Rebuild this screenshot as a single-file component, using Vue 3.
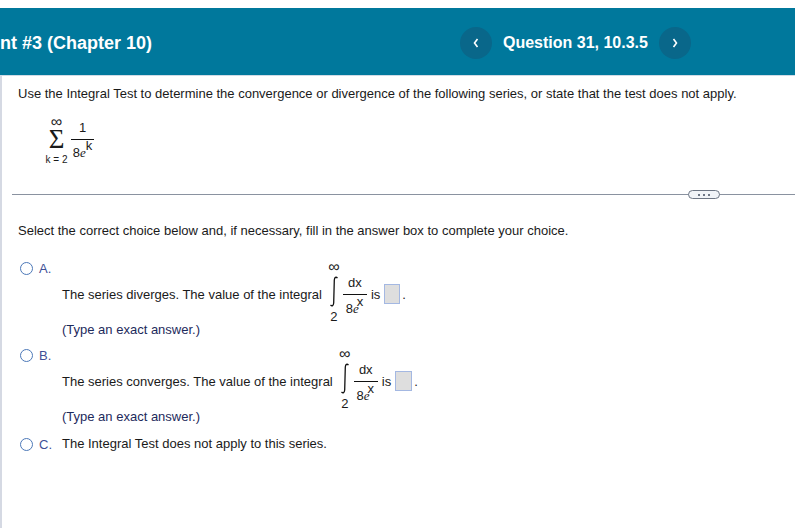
<script setup>
const choices = [
  { key: 'A', verb: 'diverges', variable: 'x' },
  { key: 'B', verb: 'converges', variable: 'x' }
]
</script>

<template>
  <div class="page">
    <header class="top-bar">
      <div class="title"><span>Assignment #3 (Chapter 10)</span></div>
      <nav class="question-nav">
        <button class="nav-btn">
          <svg width="8" height="10" viewBox="0 0 8 10"><path d="M5.5 1 L2.5 5 L5.5 9" fill="none" stroke="#fff" stroke-width="1.6" /></svg>
        </button>
        <span class="question-name">Question 31, 10.3.5</span>
        <button class="nav-btn">
          <svg width="8" height="10" viewBox="0 0 8 10"><path d="M2.5 1 L5.5 5 L2.5 9" fill="none" stroke="#fff" stroke-width="1.6" /></svg>
        </button>
      </nav>
    </header>

    <main class="content">
      <p class="prompt">Use the Integral Test to determine the convergence or divergence of the following series, or state that the test does not apply.</p>

      <div class="series">
        <div class="sigma">
          <span class="inf">∞</span>
          <span class="sigma-sign">Σ</span>
          <span class="limit">k = 2</span>
        </div>
        <div class="frac series-frac">
          <span class="num">1</span>
          <span class="den">8<i>e</i><sup>k</sup></span>
        </div>
      </div>

      <div class="divider">
        <span class="more"><b></b><b></b><b></b></span>
      </div>

      <p class="select-line">Select the correct choice below and, if necessary, fill in the answer box to complete your choice.</p>

      <div v-for="c in choices" :key="c.key" class="choice">
        <div class="choice-label"><span class="radio"></span><span class="letter">{{ c.key }}.</span></div>
        <div class="choice-body">
          <div class="formula-line">
            <span>The series {{ c.verb }}. The value of the integral</span>
            <div class="integral">
              <span class="inf">∞</span>
              <svg width="10" height="31" viewBox="0 0 10 31"><path d="M8.5 2 C7 0.6 5.6 1.2 5.3 4 L4.7 27 C4.4 29.8 3 30.4 1.5 29" fill="none" stroke="#111" stroke-width="1.3" /></svg>
              <span class="lower">2</span>
            </div>
            <div class="frac int-frac">
              <span class="num">dx</span>
              <span class="den">8<i>e</i><sup>{{ c.variable }}</sup></span>
            </div>
            <span class="is">is</span>
            <span class="answer-box"></span>
            <span class="dot">.</span>
          </div>
          <p class="hint">(Type an exact answer.)</p>
        </div>
      </div>

      <div class="choice last">
        <div class="choice-label"><span class="radio"></span><span class="letter">C.</span></div>
        <span class="last-text">The Integral Test does not apply to this series.</span>
      </div>
    </main>
  </div>
</template>

<style>
html, body {
  margin: 0;
  background: #fff;
  overflow: hidden;
}
</style>

<style scoped>
.page {
  width: 795px;
  height: 528px;
  padding-top: 8px;
  box-sizing: border-box;
  font-family: "Liberation Sans", Arial, sans-serif;
  font-size: 13px;
  color: #1a1a1a;
  overflow: hidden;
}

.top-bar {
  height: 64px;
  padding-top: 3px;
  background: #00789c;
  display: flex;
  align-items: center;
  border-bottom: 1px solid #cfdbe6;
  color: #fff;
  font-weight: bold;
  font-size: 16px;
}

.title {
  width: 152px;
  display: flex;
  justify-content: flex-end;
  white-space: nowrap;
  overflow: hidden;
  flex-shrink: 0;
  font-size: 18px;
}

.question-nav {
  margin-left: 308px;
  display: flex;
  align-items: center;
}

.nav-btn {
  width: 32px;
  height: 32px;
  border: none;
  padding: 0;
  border-radius: 50%;
  background: #09678a;
  display: flex;
  align-items: center;
  justify-content: center;
}

.question-name {
  margin: 0 11px;
}

.content {
  height: 452px;
  border-left: 2px solid #d5d9e3;
  padding-left: 16px;
  box-sizing: border-box;
}

p {
  margin: 0;
}

.prompt {
  padding-top: 11px;
  line-height: 14px;
  white-space: nowrap;
}

.series {
  display: flex;
  margin: 16px 0 0 27px;
  height: 47px;
}

.sigma {
  display: flex;
  flex-direction: column;
  align-items: center;
  width: 23px;
}

.inf {
  font-size: 16px;
  line-height: 10px;
  height: 10px;
}

.limit {
  font-size: 10px;
  line-height: 10px;
  white-space: nowrap;
  margin-top: 3px;
}

.sigma-sign {
  font-family: "Liberation Serif", serif;
  font-size: 27px;
  line-height: 25px;
  height: 25px;
}

.frac {
  display: flex;
  flex-direction: column;
  align-items: center;
}

.num {
  line-height: 14px;
  padding-bottom: 4px;
  border-bottom: 1px solid #111;
  align-self: stretch;
  text-align: center;
}

.den {
  line-height: 14px;
  padding-top: 7px;
  white-space: nowrap;
}

.den i {
  font-family: "Liberation Serif", serif;
}

.den sup {
  font-size: 13px;
  line-height: 0;
  vertical-align: 7px;
}

.series-frac {
  margin-left: 3px;
  width: 23px;
  padding-top: 4px;
}

.series-frac .den {
  padding-top: 6px;
}

.divider {
  margin: 30px 0 0 -6px;
  height: 1px;
  background: #8a92a0;
  position: relative;
}

.more {
  position: absolute;
  left: 676px;
  top: -4px;
  width: 32px;
  height: 9px;
  box-sizing: border-box;
  border: 1px solid #6d7685;
  border-radius: 5px;
  background: #f1f4f8;
  display: flex;
  align-items: center;
  justify-content: center;
  gap: 3px;
}

.more b {
  width: 2px;
  height: 2px;
  background: #6d7685;
}

.select-line {
  margin-top: 29px;
  line-height: 14px;
  white-space: nowrap;
}

.choice {
  margin-top: 23px;
  display: flex;
  flex-direction: column;
}

.choice + .choice {
  margin-top: 11px;
}

.choice-label {
  display: flex;
  align-items: center;
  height: 14px;
  color: #3f4f96;
}

.radio {
  width: 13px;
  height: 13px;
  border: 1.5px solid #4c78b8;
  border-radius: 50%;
  box-sizing: border-box;
  margin: 0 6px 0 2px;
}

.letter {
  width: 23px;
}

.choice-body {
  padding-left: 44px;
}

.formula-line {
  display: flex;
  align-items: center;
  height: 46px;
  margin-top: -4px;
  white-space: nowrap;
}

.integral {
  display: flex;
  flex-direction: column;
  align-items: center;
  width: 14px;
  margin: 0 0 3px 5px;
  gap: 4px;
}

.integral svg {
  display: block;
}

.lower {
  line-height: 12px;
}

.int-frac {
  margin: 4px 0 0 2px;
  width: 24px;
}

.int-frac .den {
  margin-right: 1px;
}

.int-frac sup {
  margin-left: -2px;
}

.is {
  margin-left: 4px;
}

.answer-box {
  width: 16px;
  height: 20px;
  margin-left: 4px;
  box-sizing: border-box;
  border: 1px solid #a4b8e2;
  background: #dedede;
}

.choice + .choice .answer-box {
  width: 17px;
}

.dot {
  margin-left: 2px;
}

.hint {
  margin-top: 6px;
  line-height: 14px;
  color: #1d2a5c;
}

.last {
  flex-direction: row;
  margin-top: 13px !important;
}

.last-text {
  line-height: 14px;
}
</style>
